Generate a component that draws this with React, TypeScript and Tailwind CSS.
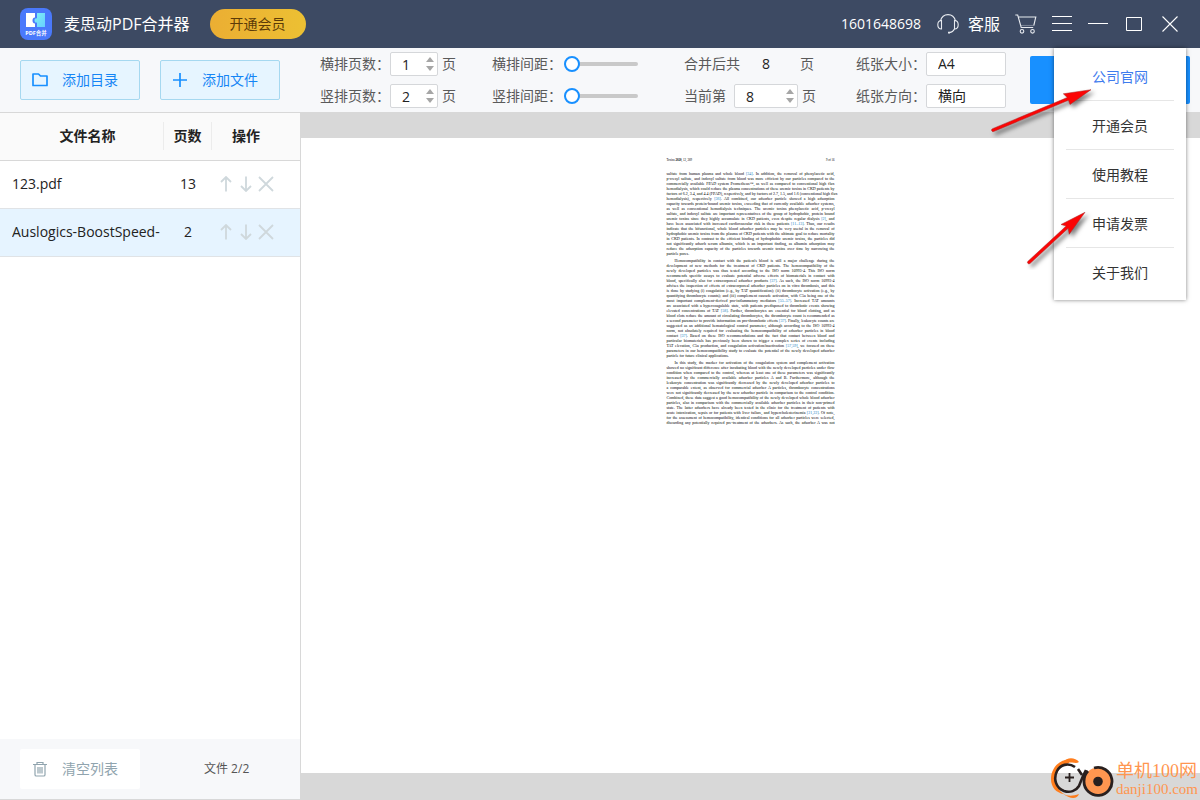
import { useState } from "react"

const MENU_ITEMS = ["公司官网", "开通会员", "使用教程", "申请发票", "关于我们"]

const FILES = [
  { name: "123.pdf", pages: 13 },
  { name: "Auslogics-BoostSpeed-", pages: 2 },
]

const PARAGRAPHS = [
  [
    "sulfate from human plasma and whole blood [34]. In addition, the removal of phenylacetic acid,",
    "p-cresyl sulfate, and indoxyl sulfate from blood was more efficient by our particles compared to the",
    "commercially available FPAD system Prometheus™, as well as compared to conventional high flux",
    "hemodialysis, which could reduce the plasma concentrations of these uremic toxins in CKD patients by",
    "factors of 6.2, 3.4, and 4.4 (FPAD), respectively, and by factors of 2.7, 1.5, and 1.6 (conventional high flux",
    "hemodialysis), respectively [36]. All combined, our adsorber particle showed a high adsorption",
    "capacity towards protein-bound uremic toxins, exceeding that of currently available adsorber systems,",
    "as well as conventional hemodialysis techniques. The uremic toxins phenylacetic acid, p-cresyl",
    "sulfate, and indoxyl sulfate are important representatives of the group of hydrophobic, protein bound",
    "uremic toxins since they highly accumulate in CKD patients, even despite regular dialysis [2], and",
    "have been associated with increased cardiovascular risk in these patients [11–13]. Thus, our results",
    "indicate that the bifunctional, whole blood adsorber particles may be very useful in the removal of",
    "hydrophobic uremic toxins from the plasma of CKD patients with the ultimate goal to reduce mortality",
    "in CKD patients. In contrast to the efficient binding of hydrophobic uremic toxins, the particles did",
    "not significantly adsorb serum albumin, which is an important finding, as albumin adsorption may",
    "reduce the adsorption capacity of the particles towards uremic toxins over time by narrowing the",
    "particle pores.",
  ],
  [
    "Hemocompatibility in contact with the patient's blood is still a major challenge during the",
    "development of new methods for the treatment of CKD patients. The hemocompatibility of the",
    "newly developed particles was thus tested according to the ISO norm 10993-4. This ISO norm",
    "recommends specific assays to evaluate potential adverse effects of biomaterials in contact with",
    "blood, specifically also for extracorporeal adsorber products [37]. As such, the ISO norm 10993-4",
    "advises the inspection of effects of extracorporeal adsorber particles on in vitro thrombosis, and this",
    "is done by studying (i) coagulation (e.g., by TAT quantification); (ii) thrombocyte activation (e.g., by",
    "quantifying thrombocyte counts); and (iii) complement cascade activation, with C5a being one of the",
    "most important complement-derived pro-inflammatory mediators [55–57]. Increased TAT amounts",
    "are associated with a hypercoagulable state, with patients predisposed to thrombotic events showing",
    "elevated concentrations of TAT [58]. Further, thrombocytes are essential for blood clotting, and as",
    "blood clots reduce the amount of circulating thrombocytes, the thrombocyte count is recommended as",
    "a second parameter to provide information on pro-thrombotic effects [37]. Finally, leukocyte counts are",
    "suggested as an additional hematological control parameter, although according to the ISO 10993-4",
    "norm, not absolutely required for evaluating the hemocompatibility of adsorber particles in blood",
    "contact [37]. Based on these ISO recommendations and the fact that contact between blood and",
    "particular biomaterials has previously been shown to trigger a complex series of events including",
    "TAT elevation, C5a production, and coagulation activation/inactivation [57,59], we focused on these",
    "parameters in our hemocompatibility study to evaluate the potential of the newly developed adsorber",
    "particle for future clinical applications.",
  ],
  [
    "In this study, the marker for activation of the coagulation system and complement activation",
    "showed no significant difference after incubating blood with the newly developed particles under flow",
    "condition when compared to the control, whereas at least one of these parameters was significantly",
    "increased by the commercially available adsorber particles A and B. Furthermore, although the",
    "leukocyte concentration was significantly decreased by the newly developed adsorber particles to",
    "a comparable extent, as observed for commercial adsorber A particles, thrombocyte concentrations",
    "were not significantly decreased by the new adsorber particle in comparison to the control condition.",
    "Combined, these data suggest a good hemocompatibility of the newly developed whole blood adsorber",
    "particles, also in comparison with the commercially available adsorber particles in their non-primed",
    "state. The latter adsorbers have already been tested in the clinic for the treatment of patients with",
    "acute intoxication, sepsis or for patients with liver failure, and hypercholesterinemia [21,22]. Of note,",
    "for the assessment of hemocompatibility, identical conditions for all adsorber particles were selected,",
    "discarding any potentially required pre-treatment of the adsorbers. As such, the adsorber A was not",
  ],
]

// citations such as [34] are drawn as blue links
function Line({ text }: { text: string }) {
  return (
    <>
      {text.split(/(\[[\d,–]+\])/).map((part, i) =>
        i % 2 ? (
          <span key={i} className="text-[#0f7cc4]">{part}</span>
        ) : (
          part
        )
      )}
    </>
  )
}

function DocumentPreview() {
  return (
    <article className="w-[168px] mx-auto pt-5 font-['Liberation_Serif',serif] text-[4px] leading-[5px] text-black">
      <header className="flex justify-between mb-2 text-[3px]">
        <span>Toxins <b>2020</b>, 12, 389</span>
        <span>9 of 16</span>
      </header>
      <div className="space-y-0.5">
        {PARAGRAPHS.map((lines, p) => (
          <p key={p}>
            {lines.map((line, i) => {
              const first = p > 0 && i === 0
              const short = p < 2 && i === lines.length - 1
              return (
                <span
                  key={i}
                  className={`block whitespace-nowrap ${first ? "pl-2" : ""} ${short ? "" : "text-justify [text-align-last:justify]"}`}
                >
                  <Line text={line} />
                </span>
              )
            })}
          </p>
        ))}
      </div>
    </article>
  )
}

function AppLogo() {
  return (
    <svg width="32" height="32" viewBox="0 0 32 32" className="shrink-0">
      <defs>
        <linearGradient id="piece" x1="0" y1="0" x2="1" y2="1">
          <stop offset="0" stopColor="#7ff0f5" />
          <stop offset="1" stopColor="#66cfff" />
        </linearGradient>
      </defs>
      <rect width="32" height="32" rx="8" fill="#4a79fb" />
      <path d="M17 5h8v14h-8v-4.500c-1.500.5-2.500-.5-2.500-2s1-2.500 2.500-2z" fill="url(#piece)" />
      <path d="M6 5h9v4.500c-2 0-2.500 1.500-2.500 3s.5 3 2.500 3V19H6z" fill="#fff" />
      <text x="16" y="27" textAnchor="middle" fontSize="5.500" fontWeight="bold" fill="#fff" fontFamily="'Open Sans','Noto Sans CJK SC',sans-serif">PDF合并</text>
    </svg>
  )
}

function HeadsetIcon() {
  return (
    <svg width="22" height="20" viewBox="0 0 22 20" fill="none" stroke="#e8ebf0" strokeWidth="1.1">
      <path d="M3.500 7C4.500 3 7 .6 11 .6S17.500 3 18.500 7" />
      <path d="M4.500 6.500V15C2 15 .8 13.200.8 10.800S2 6.500 4.500 6.500zM17.500 6.500V15c2.500 0 3.700-1.800 3.700-4.200s-1.200-4.300-3.700-4.300z" />
      <path d="M17.500 15c-1 2-2.500 3.300-5 3.600" />
      <path d="M11 18.600h2" strokeWidth="1.600" />
    </svg>
  )
}

function CartIcon() {
  return (
    <svg width="22" height="20" viewBox="0 0 22 20" fill="none" stroke="#e8ebf0" strokeWidth="1.1">
      <path d="M.3 1h2.400l3.500 12.500h12M3.500 3h17.300l-2 8.500" />
      <path d="M6 11.500h12.800" strokeOpacity=".35" />
      <circle cx="7" cy="17.300" r="1.800" />
      <circle cx="17.500" cy="17.300" r="1.800" />
    </svg>
  )
}

function Spinner({ label, value, width }: { label: string; value: number; width: string }) {
  const [count, setCount] = useState(value)
  return (
    <div className={`relative ${width}`}>
      <input
        aria-label={label}
        className="block w-full h-6 pl-[11px] border border-[#d5d7da] rounded-[2px] bg-white text-sm text-[#222222]"
        value={count}
        onChange={(e) => setCount(Number(e.target.value) || 0)}
      />
      <div className="absolute right-1 top-1 flex flex-col gap-1">
        <button aria-label="增加" onClick={() => setCount(count + 1)}>
          <svg width="8" height="6" viewBox="0 0 8 6" className="block"><path d="M4 1l4 5H0z" fill="#a6a6a6" /></svg>
        </button>
        <button aria-label="减少" onClick={() => setCount(count - 1)}>
          <svg width="8" height="6" viewBox="0 0 8 6" className="block"><path d="M0 0h8L4 5z" fill="#a6a6a6" /></svg>
        </button>
      </div>
    </div>
  )
}

function Slider({ label }: { label: string }) {
  return (
    <label className="flex items-center h-6">
      <span className="w-[72px]">{label}</span>
      <input
        type="range"
        defaultValue={0}
        className="w-[74px] h-4 appearance-none bg-transparent [&::-webkit-slider-runnable-track]:h-1 [&::-webkit-slider-runnable-track]:rounded-full [&::-webkit-slider-runnable-track]:bg-[#c9c9c9] [&::-webkit-slider-thumb]:appearance-none [&::-webkit-slider-thumb]:size-4 [&::-webkit-slider-thumb]:-mt-1.5 [&::-webkit-slider-thumb]:rounded-full [&::-webkit-slider-thumb]:border-2 [&::-webkit-slider-thumb]:border-[#1890ff] [&::-webkit-slider-thumb]:bg-white"
      />
    </label>
  )
}

function PaperSelect({ label, value }: { label: string; value: string }) {
  return (
    <label className="flex items-center h-6">
      <span className="w-[70px]">{label}</span>
      <select className="w-20 h-6 pl-[11px] appearance-none border border-[#d5d7da] rounded-[2px] bg-white text-sm leading-5 text-[#222222]">
        <option>{value}</option>
      </select>
    </label>
  )
}

function TitleBar() {
  return (
    <header className="flex items-center h-12 shrink-0 pl-5 pr-3 bg-[#3d4a63] text-white">
      <AppLogo />
      <h1 className="ml-3 text-base">麦思动PDF合并器</h1>
      <button className="ml-5 w-24 h-[30px] rounded-full bg-linear-to-r from-[#ebae33] to-[#ecc033] text-sm text-[#5c3b08]">
        开通会员
      </button>
      <span className="ml-auto mr-4 text-sm">1601648698</span>
      <a href="#service" className="flex items-center gap-[9px] mr-2 text-base">
        <HeadsetIcon />
        客服
      </a>
      <button aria-label="购物车" className="flex justify-center w-9"><CartIcon /></button>
      <button aria-label="菜单" className="flex justify-center w-9">
        <svg width="20" height="16" viewBox="0 0 20 16" stroke="#fff"><path d="M0 .5h20M0 7.500h20M0 14.500h20" /></svg>
      </button>
      <button aria-label="最小化" className="flex justify-center w-9">
        <svg width="20" height="16" viewBox="0 0 20 16" stroke="#fff"><path d="M0 7.500h20" /></svg>
      </button>
      <button aria-label="最大化" className="flex justify-center w-9">
        <svg width="16" height="16" viewBox="0 0 16 16" fill="none" stroke="#fff"><path d="M.5 1.500h15v13H.5z" /></svg>
      </button>
      <button aria-label="关闭" className="flex justify-center w-9">
        <svg width="16" height="16" viewBox="0 0 16 16" stroke="#fff" strokeWidth="1.1"><path d="M.5.5l15 15M15.500.5l-15 15" /></svg>
      </button>
    </header>
  )
}

function Toolbar() {
  return (
    <div className="flex items-center h-16 shrink-0 pl-5 pr-2.5 bg-[#f7f8fa] text-sm text-[#5a5a5a]">
      <button className="flex items-center w-[120px] h-10 mr-5 pl-[11px] gap-3 border border-[#a5d8f0] rounded-[2px] bg-[#e6f5ff] text-[#1585f5]">
        <svg width="18" height="16" viewBox="0 0 18 16" fill="none" stroke="#1890ff" strokeWidth="1.700">
          <path d="M1 2h5.500l2 2H15v9.500H1z" strokeLinejoin="round" />
        </svg>
        添加目录
      </button>
      <button className="flex items-center w-[120px] h-10 mr-10 pl-[11px] gap-3 border border-[#a5d8f0] rounded-[2px] bg-[#e6f5ff] text-[#1585f5]">
        <svg width="18" height="16" viewBox="0 0 18 16" stroke="#1890ff" strokeWidth="1.700">
          <path d="M1 8h14M8 1v14" />
        </svg>
        添加文件
      </button>

      <div className="w-[172px] space-y-2">
        <div className="flex items-center h-6">
          <span className="w-[70px]">横排页数：</span>
          <Spinner label="横排页数" value={1} width="w-12" />
          <span className="ml-1">页</span>
        </div>
        <div className="flex items-center h-6">
          <span className="w-[70px]">竖排页数：</span>
          <Spinner label="竖排页数" value={2} width="w-12" />
          <span className="ml-1">页</span>
        </div>
      </div>

      <div className="w-[192px] space-y-2">
        <Slider label="横排间距：" />
        <Slider label="竖排间距：" />
      </div>

      <div className="w-[172px] space-y-2">
        <div className="flex items-center h-6">
          <span>合并后共</span>
          <output className="w-[52px] text-center text-[#222222]">8</output>
          <span className="ml-2">页</span>
        </div>
        <div className="flex items-center h-6">
          <span className="mr-2">当前第</span>
          <Spinner label="当前第" value={8} width="w-16" />
          <span className="ml-1">页</span>
        </div>
      </div>

      <div className="space-y-2">
        <PaperSelect label="纸张大小：" value="A4" />
        <PaperSelect label="纸张方向：" value="横向" />
      </div>

      <button aria-label="开始合并" className="flex-1 h-12 ml-6 rounded-[2px] bg-[#1890ff]" />
    </div>
  )
}

function RowActions() {
  return (
    <div className="flex justify-center text-[#cfd8dc]">
      <button aria-label="上移" className="flex justify-center w-5">
        <svg width="12" height="16" viewBox="0 0 12 16" fill="none" stroke="currentColor" strokeWidth="1.800"><path d="M6 15.500V1.500M1 6l5-5 5 5" /></svg>
      </button>
      <button aria-label="下移" className="flex justify-center w-5">
        <svg width="12" height="16" viewBox="0 0 12 16" fill="none" stroke="currentColor" strokeWidth="1.800"><path d="M6 .5v14M1 10l5 5 5-5" /></svg>
      </button>
      <button aria-label="删除" className="flex justify-center w-5">
        <svg width="16" height="16" viewBox="0 0 16 16" stroke="currentColor" strokeWidth="1.800"><path d="M1 1l14 14M15 1L1 15" /></svg>
      </button>
    </div>
  )
}

function Sidebar() {
  const [selected, setSelected] = useState(1)
  return (
    <aside className="flex flex-col w-[301px] shrink-0 border-r border-y border-[#d8d8d8] bg-white">
      <table className="w-full table-fixed text-sm text-[#222222]">
        <colgroup>
          <col className="w-[164px]" />
          <col className="w-12" />
          <col className="w-[68px]" />
          <col />
        </colgroup>
        <thead>
          <tr className="h-[47px] border-b border-[#d8d8d8] bg-[#fafafa]">
            <th className="p-0">
              <div className="h-7 pl-3 leading-7 border-r border-[#ececec]">文件名称</div>
            </th>
            <th className="p-0">
              <div className="h-7 leading-7 border-r border-[#ececec]">页数</div>
            </th>
            <th className="p-0">操作</th>
            <th className="p-0" />
          </tr>
        </thead>
        <tbody>
          {FILES.map((file, i) => (
            <tr
              key={file.name}
              onClick={() => setSelected(i)}
              className={`h-12 border-b border-[#e0e3e6] ${i === selected ? "bg-[#e6f4ff]" : ""}`}
            >
              <td className="py-0 pl-3 pr-0">
                <div className="overflow-hidden whitespace-nowrap">{file.name}</div>
              </td>
              <td className="p-0 text-center">{file.pages}</td>
              <td className="p-0"><RowActions /></td>
              <td className="p-0" />
            </tr>
          ))}
        </tbody>
      </table>

      <div className="flex items-center h-[60px] mt-auto pl-5 bg-[#f7f8fa]">
        <button className="flex items-center w-[120px] h-10 pl-3 gap-3 rounded-[2px] bg-white text-sm text-[#90a4ae]">
          <svg width="18" height="16" viewBox="0 0 18 16" fill="none" stroke="#90a4ae" strokeWidth="1.200">
            <path d="M1 3.500h14M5 3.500V1.500h6v2M3 3.500v10.200c0 .8.500 1.300 1.300 1.300h7.400c.8 0 1.300-.5 1.300-1.300V3.500M6 6v6.500M8 6v6.500M10 6v6.500" />
          </svg>
          清空列表
        </button>
        <span className="ml-16 text-xs text-[#555555]">文件 2/2</span>
      </div>
    </aside>
  )
}

function DropMenu() {
  return (
    <nav className="absolute top-12 right-3.5 w-[132px] px-3 py-1 bg-white shadow-[0_0_4px_rgba(0,0,0,0.5)]">
      {MENU_ITEMS.map((item, i) => (
        <a
          key={item}
          href="#menu"
          className={`block h-[49px] leading-[49px] text-center text-sm border-b border-[#e6e6e6] last:h-12 last:border-0 ${i === 0 ? "text-[#3f7cee]" : "text-[#333333]"}`}
        >
          {item}
        </a>
      ))}
    </nav>
  )
}

function Arrows() {
  return (
    <svg width="120" height="190" viewBox="984 80 120 190" className="absolute top-20 right-24 pointer-events-none">
      <g className="drop-shadow-[3px_3px_2px_rgba(0,0,0,0.5)]" fill="#fb0505" stroke="#a52a2a" strokeWidth=".5">
        <path d="M1091 89.700L1063.300 93.800l4 3.700-74.800 31.200a1.500 1.500 0 0 0 1.200 2.800l74.800-31.200 1.500 4.200z" />
        <path d="M1085 212.300L1061 224.500l5.200 1.500-38.200 35.200a1.500 1.500 0 0 0 2 2.300l38.200-35.200 1 6z" />
      </g>
    </svg>
  )
}

function Watermark() {
  return (
    <div className="absolute right-0.5 bottom-0 flex items-center gap-0.5 text-[#ff9650]">
      <svg width="64" height="42" viewBox="0 0 64 42" fill="none">
        <path d="M19 1.500C8 2 1 11 1 21c0 8 5 14 13 15-5-3-8-8-8-15C6 12 12 7 19 5z" fill="#ff7d1c" />
        <path d="M13 4c4-5 12-5 16 0-2 1.500-4 1-7 .5-3 0-6 .5-9-.5zM12 35c6 4 11 3 17 1-2 5-8 6-17-1z" fill="#ff7d1c" />
        <path d="M25 9C18 4 10 7 7 13c-4 8-1 17 7 20 6 2 12 0 15-5l4-10 3-6" stroke="#29201f" strokeWidth="2.600" />
        <path d="M28 11l4 6" stroke="#29201f" strokeWidth="2.600" />
        <circle cx="48" cy="23.500" r="14" fill="#ff9650" />
        <path d="M44 10a14 14 0 1 1-10 13c0-4 1-7 4-10" stroke="#29201f" strokeWidth="2.800" />
        <circle cx="48" cy="23.500" r="4.800" fill="#29201f" />
        <path d="M19.500 15v9M15 19.500h9" stroke="#29201f" strokeWidth="1.800" />
      </svg>
      <div className="font-['Liberation_Serif','Noto_Sans_CJK_SC',serif]">
        <div className="text-lg leading-5">单机100网</div>
        <div className="text-[15px] leading-4">danji100.com</div>
      </div>
    </div>
  )
}

export default function App() {
  return (
    <div className="relative flex flex-col h-screen overflow-hidden font-['Open_Sans','Noto_Sans_CJK_SC',sans-serif]">
      <TitleBar />
      <Toolbar />
      <div className="flex flex-1 min-h-0">
        <Sidebar />
        <main className="flex-1 flex flex-col pt-[26px] pb-[27px] bg-[#d8d8d8]">
          <div className="flex-1 bg-white">
            <DocumentPreview />
          </div>
        </main>
      </div>
      <DropMenu />
      <Arrows />
      <Watermark />
    </div>
  )
}
